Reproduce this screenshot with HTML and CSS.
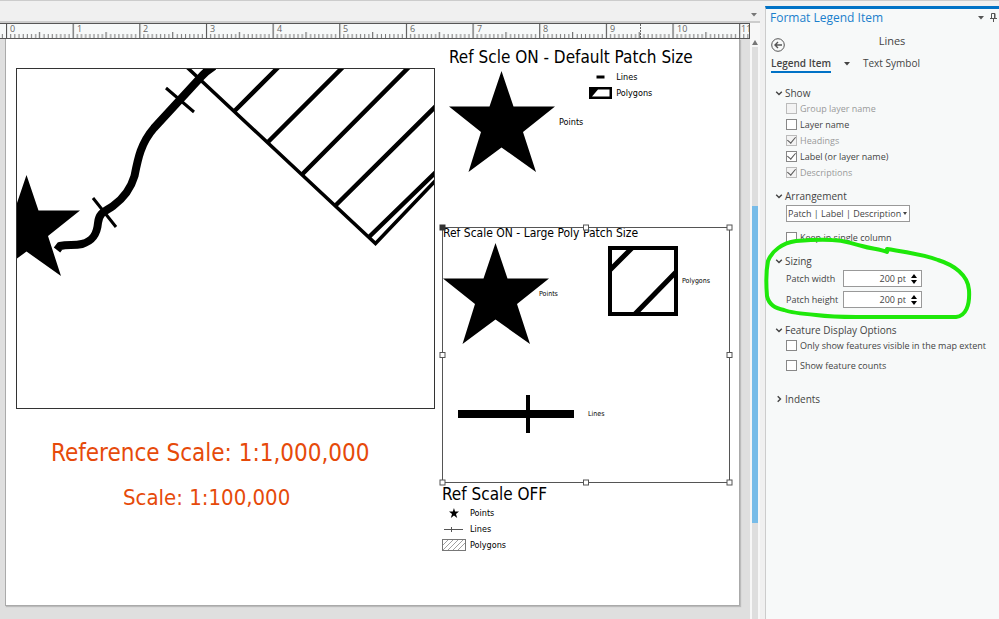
FILE: index.html
```
<!DOCTYPE html>
<html lang="en">
<head>
  <meta charset="UTF-8">
  <meta name="viewport" content="width=device-width, initial-scale=1">
  <title>Format Legend Item</title>
  <link rel="stylesheet" href="styles.css">
</head>
<body>

  <!-- Shared shapes -->
  <svg class="defs" aria-hidden="true">
    <symbol id="star" viewBox="0 0 106 101" preserveAspectRatio="none">
      <path d="M52.5 0 64.5 35.5H106L74 61 87 101 52.5 76.5 19.5 101 32 61 0 35.5H40.5z"/>
    </symbol>
    <symbol id="chevron" viewBox="0 0 8 8">
      <path d="M1.2 2.7 4 5.5 6.8 2.7" fill="none" stroke="#444" stroke-width="1.4"/>
    </symbol>
  </svg>

  <div class="app">
    <main class="layout-view">
      <div class="view-tabs">
        <button class="icon-button" aria-label="View list">
          <svg width="6" height="4"><path d="M0 0h6L3 3.5z" fill="#777"/></svg>
        </button>
      </div>

      <div class="view-body">
        <div class="canvas">
          <svg class="ruler" aria-label="Ruler">
            <defs>
              <pattern id="ticks" x="6" width="66.65" height="15" patternUnits="userSpaceOnUse">
                <path d="M0.5 0V15" stroke="#555" stroke-width="1.2"/>
                <path d="M33.5 8V15" stroke="#555"/>
                <path d="M4.7 10V15M8.8 10V15M13 10V15M17.2 10V15M21.3 10V15M25.5 10V15M29.7 10V15M38 10V15M42.2 10V15M46.3 10V15M50.5 10V15M54.7 10V15M58.8 10V15M63 10V15" stroke="#777"/>
              </pattern>
            </defs>
            <rect width="100%" height="15" fill="url(#ticks)"/>
            <path d="M640.5 0V15" stroke="#666" stroke-dasharray="2 1"/>
            <text x="10" y="8">0</text>
            <text x="77" y="8">1</text>
            <text x="143" y="8">2</text>
            <text x="210" y="8">3</text>
            <text x="277" y="8">4</text>
            <text x="343" y="8">5</text>
            <text x="410" y="8">6</text>
            <text x="477" y="8">7</text>
            <text x="543" y="8">8</text>
            <text x="610" y="8">9</text>
            <text x="677" y="8">10</text>
            <text x="741" y="8">11</text>
          </svg>

          <div class="page">
            <!-- Map frame -->
            <div class="map-frame">
              <svg width="417" height="339" viewBox="17 69 417 339" role="img" aria-label="Map">
                <use href="#star" x="-26" y="175" width="106" height="101"/>
                <g fill="none" stroke="#000">
                  <path d="M57 250 60 246C68 244 74 246 82 244 93 241 97 234 98 223 99 212 106 211 113 206 124 198 131 188 134.500 176 138 158 141 143 154 128L200 78Q206 71 214 66" stroke-width="8"/>
                  <path d="M93 198 116 227M166 88 194 112" stroke-width="3"/>
                  <path d="M184 64.500 375.500 243.500 437 179" stroke-width="3.500"/>
                  <path d="M234.500 111 280 65.500M267.500 142.500 345 65M302 174.500 411 65M335.500 205.500 437 105M369 237 437 171" stroke-width="4.500"/>
                </g>
              </svg>
            </div>
            <p class="scale-text reference-scale">Reference Scale: 1:1,000,000</p>
            <p class="scale-text map-scale">Scale: 1:100,000</p>

            <!-- Legend, default patch size -->
            <section class="legend legend-default">
              <h2 class="legend-title">Ref Scle ON - Default Patch Size</h2>
              <div class="legend-columns">
                <div class="legend-item point-item">
                  <svg width="106" height="101"><use href="#star" width="106" height="101"/></svg>
                  <span>Points</span>
                </div>
                <div class="legend-stack">
                  <div class="legend-item">
                    <svg width="23" height="12"><path d="M7.500 4.500h8v3h-8z"/></svg>
                    <span>Lines</span>
                  </div>
                  <div class="legend-item">
                    <svg width="23" height="12"><path fill-rule="evenodd" d="M0 0h23v12H0zM3 9.500h17.500v-7H9z"/></svg>
                    <span>Polygons</span>
                  </div>
                </div>
              </div>
            </section>

            <!-- Legend, large patch size (selected) -->
            <section class="legend legend-large">
              <h2 class="legend-title">Ref Scale ON - Large Poly Patch Size</h2>
              <svg class="large-star" width="106" height="101"><use href="#star" width="106" height="101"/></svg>
              <span class="large-points-label">Points</span>
              <div class="legend-item large-polygons">
                <svg width="70" height="70" fill="none" stroke="#000">
                  <rect x="2" y="2" width="66" height="66" stroke-width="4"/>
                  <path d="M2 24 24 2M26 69 69 25" stroke-width="5"/>
                </svg>
                <span>Polygons</span>
              </div>
              <div class="legend-item large-lines">
                <svg width="116" height="38"><path d="M0 15h116v8H0zM68 0h4v38h-4z"/></svg>
                <span>Lines</span>
              </div>
              <svg class="selection" width="296" height="264" fill="#fff" stroke="#555">
                <rect x="4.500" y="4.500" width="287" height="255" fill="none"/>
                <rect x="2" y="2" width="5" height="5" fill="#333" stroke="#333"/>
                <rect x="145.500" y="2" width="5" height="5"/>
                <rect x="289" y="2" width="5" height="5"/>
                <rect x="2" y="129.500" width="5" height="5"/>
                <rect x="289" y="129.500" width="5" height="5"/>
                <rect x="2" y="257" width="5" height="5"/>
                <rect x="145.500" y="257" width="5" height="5"/>
                <rect x="289" y="257" width="5" height="5"/>
              </svg>
            </section>

            <!-- Legend, reference scale off -->
            <section class="legend legend-off">
              <h2 class="legend-title">Ref Scale OFF</h2>
              <div class="legend-item">
                <svg width="24" height="12"><use href="#star" x="7" y="1" width="10" height="10"/></svg>
                <span>Points</span>
              </div>
              <div class="legend-item">
                <svg width="24" height="12" stroke="#555"><path d="M2 6.500h19M9.500 4v5"/></svg>
                <span>Lines</span>
              </div>
              <div class="legend-item">
                <svg width="24" height="12" fill="none" stroke="#777"><rect x="0.500" y="0.500" width="23" height="11"/><path d="M1 6 6 1M1 11 11 1M6 11 16 1M11 11 21 1M16 11 23 4" stroke-width="0.700"/></svg>
                <span>Polygons</span>
              </div>
            </section>
          </div>
        </div>

        <div class="scrollbar" aria-hidden="true">
          <svg width="6" height="5"><path d="M3 0 6 5H0z" fill="#777"/></svg>
          <div class="scroll-track"><div class="scroll-thumb"></div></div>
        </div>
      </div>
    </main>

    <aside class="panel">
      <header class="panel-header">
        <h1 class="panel-title">Format Legend Item</h1>
        <button class="icon-button" aria-label="Pane options">
          <svg width="6" height="4"><path d="M0 0h6L3 3.500z" fill="#555"/></svg>
        </button>
        <button class="icon-button" aria-label="Pin">
          <svg width="7" height="9" fill="none" stroke="#555"><path d="M1.500 5V.5h3.500V5M0 5.500h7M3.500 5.500V9M4.500 1v4"/></svg>
        </button>
      </header>

      <div class="panel-subject">
        <button class="icon-button" aria-label="Back">
          <svg width="14" height="14" fill="none" stroke="#555"><circle cx="7" cy="7" r="6.300"/><path d="M11 7H4M7 4 4 7l3 3" stroke-width="1.400"/></svg>
        </button>
        <span>Lines</span>
      </div>

      <nav class="panel-tabs">
        <a class="tab active" href="#legend-item">Legend Item</a>
        <button class="icon-button" aria-label="More">
          <svg width="6" height="4"><path d="M0 0h6L3 3.500z" fill="#444"/></svg>
        </button>
        <a class="tab" href="#text-symbol">Text Symbol</a>
      </nav>

      <section class="group">
        <h2 class="group-title"><svg width="8" height="8"><use href="#chevron"/></svg>Show</h2>
        <label class="check disabled"><input type="checkbox" disabled>Group layer name</label>
        <label class="check"><input type="checkbox">Layer name</label>
        <label class="check disabled"><input type="checkbox" checked disabled>Headings</label>
        <label class="check"><input type="checkbox" checked>Label (or layer name)</label>
        <label class="check disabled"><input type="checkbox" checked disabled>Descriptions</label>
      </section>

      <section class="group">
        <h2 class="group-title"><svg width="8" height="8"><use href="#chevron"/></svg>Arrangement</h2>
        <div class="select-wrapper">
          <select aria-label="Arrangement">
            <option>Patch | Label | Description</option>
          </select>
          <svg width="4" height="3"><path d="M0 0h4L2 3z" fill="#444"/></svg>
        </div>
        <label class="check"><input type="checkbox">Keep in single column</label>
      </section>

      <section class="group sizing">
        <h2 class="group-title"><svg width="8" height="8"><use href="#chevron"/></svg>Sizing</h2>
        <div class="size-row">
          <label for="patch-width">Patch width</label>
          <div class="spinner">
            <input type="text" id="patch-width" value="200 pt">
            <div class="spin-buttons">
              <button aria-label="Increase width"><svg width="6" height="4"><path d="M3 0 6 4H0z"/></svg></button>
              <button aria-label="Decrease width"><svg width="6" height="4"><path d="M0 0h6L3 4z"/></svg></button>
            </div>
          </div>
        </div>
        <div class="size-row">
          <label for="patch-height">Patch height</label>
          <div class="spinner">
            <input type="text" id="patch-height" value="200 pt">
            <div class="spin-buttons">
              <button aria-label="Increase height"><svg width="6" height="4"><path d="M3 0 6 4H0z"/></svg></button>
              <button aria-label="Decrease height"><svg width="6" height="4"><path d="M0 0h6L3 4z"/></svg></button>
            </div>
          </div>
        </div>
        <!-- Hand-drawn highlight -->
        <svg class="highlight" width="210" height="86" viewBox="763 238 210 86" aria-hidden="true">
          <path d="M887 253C880 250 872 250 862 247 848 244 845 241 832 241 820 240 808 241 796 242 782 244 772 252 768 262 766 272 766 285 767 297 769 306 775 309 784 311 792 314 804 315 816 316 832 318 842 318 856 318L956 318C966 317 970 306 969 291 968 276 954 266 938 261 922 255 905 253 887 250" fill="none" stroke="#1ee80a" stroke-width="4" stroke-linecap="round" stroke-linejoin="round"/>
        </svg>
      </section>

      <section class="group feature-options">
        <h2 class="group-title"><svg width="8" height="8"><use href="#chevron"/></svg>Feature Display Options</h2>
        <label class="check"><input type="checkbox">Only show features visible in the map extent</label>
        <label class="check"><input type="checkbox">Show feature counts</label>
      </section>

      <section class="group">
        <h2 class="group-title collapsed"><svg width="8" height="8"><use href="#chevron"/></svg>Indents</h2>
      </section>
    </aside>
  </div>

</body>
</html>
```
FILE: styles.css
```
* {
  box-sizing: border-box;
}

body {
  margin: 0;
  font-family: "Open Sans", "Noto Sans", sans-serif;
  font-size: 9px;
  color: #444;
  background-color: #f0f0f0;
}

h1, h2, p {
  margin: 0;
  font-weight: normal;
}

svg {
  display: block;
  flex: none;
}

.defs {
  position: absolute;
  width: 0;
  height: 0;
}

.icon-button {
  padding: 0;
  border: none;
  background: none;
  cursor: pointer;
}

.app {
  display: flex;
  min-height: 100vh;
  border-top: 1px solid #ccc;
}

/* Layout view */
.layout-view {
  flex: 1;
  min-width: 0;
  display: flex;
  flex-direction: column;
}

.view-tabs {
  display: flex;
  justify-content: flex-end;
  align-items: center;
  height: 22px;
  padding: 8px 3px 0 0;
  border-bottom: 2px solid #ccc;
}

.view-body {
  flex: 1;
  display: flex;
}

.canvas {
  flex: 1;
  min-width: 0;
  display: flex;
  flex-direction: column;
  background-color: #dfdfdf;
}

.ruler {
  width: 100%;
  height: 16px;
  border: 1px solid #555;
  border-left: none;
  background-color: #f7f9f9;
  font-size: 9px;
  fill: #666;
}

.page {
  position: relative;
  flex: 1;
  margin: 0 10px 13px 5px;
  border: 1px solid #aaa;
  border-top: none;
  background-color: #fff;
  color: #000;
  font-family: "DejaVu Sans Condensed", "DejaVu Sans", sans-serif;
  box-shadow: 1px 1px 1px #bbb;
}

.map-frame {
  position: absolute;
  left: 10px;
  top: 29px;
  border: 1px solid #333;
}

.scale-text {
  position: absolute;
  color: #e64a0a;
  white-space: nowrap;
}

.reference-scale {
  left: 45px;
  top: 399px;
  font-size: 24px;
  line-height: 30px;
}

.map-scale {
  left: 117px;
  top: 445px;
  font-size: 22px;
  line-height: 28px;
}

/* Legends */
.legend {
  position: absolute;
  white-space: nowrap;
}

.legend-title {
  font-size: 17px;
  line-height: 20px;
}

.legend-item {
  display: flex;
  align-items: center;
  gap: 4px;
  height: 16px;
}

.legend-default {
  left: 443px;
  top: 8px;
}

.legend-columns {
  display: flex;
  gap: 6px;
  padding-top: 2px;
}

.point-item {
  height: auto;
  padding-top: 2px;
}

.legend-large {
  left: 437px;
  top: 189px;
  width: 288px;
  height: 256px;
  font-size: 7px;
}

.legend-large .legend-title {
  font-size: 12px;
  line-height: 10px;
}

.large-star {
  position: absolute;
  left: 0;
  top: 15px;
}

.large-points-label {
  position: absolute;
  left: 96px;
  top: 62px;
}

.large-polygons {
  position: absolute;
  left: 165px;
  top: 18px;
  height: 70px;
}

.large-lines {
  position: absolute;
  left: 15px;
  top: 167px;
  height: 38px;
  gap: 14px;
}

.selection {
  position: absolute;
  left: -5px;
  top: -5px;
}

.legend-off {
  left: 436px;
  top: 444px;
}

.legend-off .legend-title {
  line-height: 22px;
}

/* Scroll bar */
.scrollbar {
  display: flex;
  flex-direction: column;
  align-items: center;
  gap: 2px;
  width: 10px;
  padding-top: 17px;
  background-color: #f7f7f7;
}

.scroll-track {
  flex: 1;
  width: 6px;
  padding-top: 159px;
  background-color: #dedede;
}

.scroll-thumb {
  height: 317px;
  background-color: #78bce8;
}

/* Format panel */
.panel {
  flex: none;
  width: 234px;
  margin-top: 5px;
  margin-left: 5px;
  border-top: 3px solid #0072c6;
  border-left: 1px solid #ccc;
  background-color: #f7f9f9;
}

.panel-header {
  display: flex;
  align-items: center;
  gap: 6px;
  height: 17px;
  padding: 0 2px 0 4px;
}

.panel-title {
  flex: 1;
  font-size: 12px;
  line-height: 17px;
  color: #1a7fcc;
}

.panel-subject {
  display: grid;
  grid-template-columns: 14px 1fr;
  height: 26px;
  padding: 6px 0 0 5px;
  font-size: 11px;
  line-height: 18px;
  text-align: center;
}

.panel-subject .icon-button {
  padding-top: 6px;
}

.panel-tabs {
  display: flex;
  align-items: center;
  gap: 13px;
  height: 22px;
  padding: 2px 0 0 5px;
}

.tab {
  border-bottom: 2px solid transparent;
  font-size: 10px;
  line-height: 16px;
  color: #444;
  text-decoration: none;
}

.tab.active {
  border-bottom-color: #0072c6;
  font-weight: 600;
}

.group {
  position: relative;
  padding: 0 0 9px 20px;
}

.panel-tabs + .group {
  padding-top: 12px;
}

.group-title {
  display: flex;
  align-items: center;
  gap: 2px;
  margin-left: -11px;
  height: 14px;
  font-size: 10px;
  font-weight: 500;
}

.group-title.collapsed svg {
  transform: rotate(-90deg);
}

.check {
  display: flex;
  align-items: center;
  gap: 3px;
  height: 16px;
  white-space: nowrap;
}

.check.disabled {
  color: #999;
}

.check input {
  appearance: none;
  flex: none;
  display: grid;
  place-items: center;
  width: 11px;
  height: 11px;
  margin: 0;
  border: 1px solid #888;
  background-color: #fff;
}

.check input:disabled {
  border-color: #bbb;
  background-color: #f3f3f3;
}

.check input:checked::before {
  content: "";
  width: 4px;
  height: 7px;
  margin-top: -2px;
  border: solid #555;
  border-width: 0 1px 1px 0;
  transform: rotate(40deg);
}

.select-wrapper {
  display: grid;
  align-items: center;
  width: 124px;
  margin: 2px 0 7px;
}

.select-wrapper select {
  appearance: none;
  grid-area: 1 / 1;
  height: 17px;
  padding: 0 1px;
  border: 1px solid #999;
  border-radius: 0;
  background-color: #fff;
  color: #444;
  font: inherit;
}

.select-wrapper svg {
  grid-area: 1 / 1;
  justify-self: end;
  margin-right: 3px;
  pointer-events: none;
}

.size-row {
  display: grid;
  grid-template-columns: 57px 79px;
  align-items: center;
  margin-top: 2px;
}

.size-row + .size-row {
  margin-top: 4px;
}

.size-row label {
  white-space: nowrap;
}

.spinner {
  display: flex;
  height: 17px;
  border: 1px solid #999;
  background-color: #fff;
}

.spinner input {
  flex: 1;
  min-width: 0;
  padding: 0;
  border: none;
  background: none;
  color: #444;
  font: inherit;
  text-align: right;
}

.spin-buttons {
  display: flex;
  flex-direction: column;
  justify-content: center;
  gap: 2px;
  padding: 0 4px 0 5px;
}

.spin-buttons button {
  padding: 0;
  border: none;
  background: none;
}

.highlight {
  position: absolute;
  left: -3px;
  top: -17px;
  pointer-events: none;
}

.sizing {
  padding-bottom: 15px;
}

.feature-options {
  padding-bottom: 19px;
}

.feature-options .check + .check {
  margin-top: 4px;
}
```
